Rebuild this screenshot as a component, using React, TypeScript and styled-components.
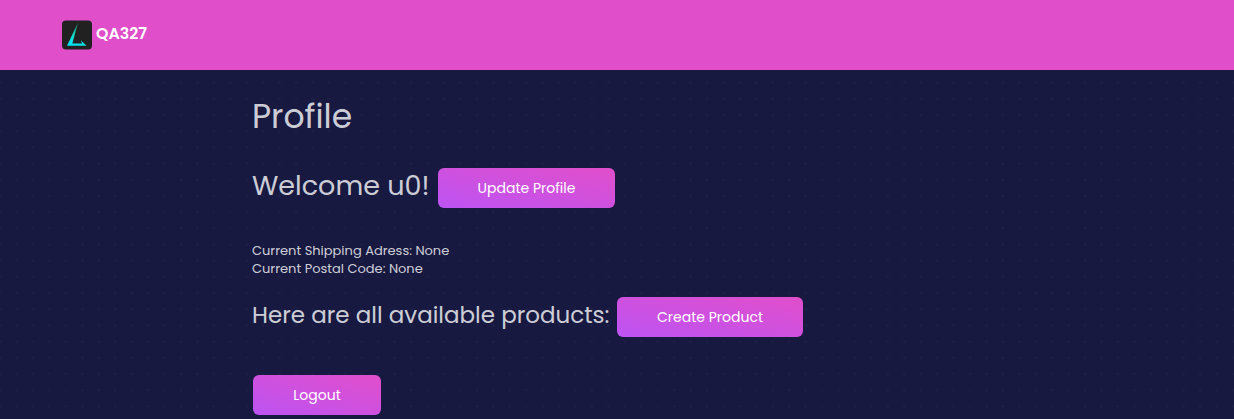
import React from 'react';
import styled, { createGlobalStyle } from 'styled-components';

const GlobalStyle = createGlobalStyle`
  * { box-sizing: border-box; }
  body {
    margin: 0;
    height: 419px;
    overflow: hidden;
    background: #171941;
    color: rgba(255, 255, 255, 0.8);
    font-family: Poppins, Inter, sans-serif;
    font-size: 14px;
  }
`;

const Page = styled.div`
  height: 419px;
  overflow: hidden;
  background-image: radial-gradient(circle at 50% 50%, #1e2048 0.8px, transparent 1.5px);
  background-size: 16.44px 16.2px;
  background-position: -8px 74.5px;
`;

const Navbar = styled.header`
  height: 70px;
  padding: 20px 62px 0;
  display: flex;
  gap: 4px;
  background: #e14eca;
`;

const Brand = styled.span`
  color: #fff;
  font-size: 15.8px;
  font-weight: 600;
  line-height: 27px;
`;

const Content = styled.main`
  padding: 28px 0 0 252px;
`;

const Row = styled.div<{ $gapTop: number }>`
  display: flex;
  height: 40px;
  margin-top: ${(p) => p.$gapTop}px;
`;

const Heading = styled.h1<{ $size: number; $line: number; $width?: number }>`
  margin: 0;
  width: ${(p) => (p.$width ? `${p.$width}px` : 'auto')};
  font-size: ${(p) => p.$size}px;
  font-weight: 400;
  line-height: ${(p) => p.$line}px;
  white-space: nowrap;
`;

const Button = styled.button<{ $width: number }>`
  width: ${(p) => p.$width}px;
  height: 40px;
  padding: 0;
  border: 0;
  border-radius: 6px;
  color: #fff;
  font: inherit;
  font-size: 14px;
  line-height: 40px;
  background: linear-gradient(to bottom left, #e14eca, #ba54f5, #e14eca) top right / 210% 210%;
`;

const LogoutButton = styled(Button)`
  margin-left: 1px;
`;

const Details = styled.div`
  margin-top: 34px;
  line-height: 18px;
`;

const Detail = styled.p`
  margin: 0;
  font-size: 13px;
`;

const Logo = () => (
  <svg width="30" height="30" viewBox="0 0 30 30">
    <defs>
      <linearGradient id="blade" x1="0" y1="1" x2="0.3" y2="0">
        <stop offset="0" stopColor="#00e5ff" />
        <stop offset="0.5" stopColor="#15ddc8" />
        <stop offset="1" stopColor="#168d70" />
      </linearGradient>
    </defs>
    <rect width="30" height="29" rx="4" y="0.4" fill="#212121" />
    <path fill="url(#blade)" d="M16 2.6 5 25.8h19.6l-5.9-5.6 1.4 3.3H10.4Z" />
  </svg>
);

export default function App() {
  return (
    <>
      <GlobalStyle />
      <Page>
        <Navbar>
          <Logo />
          <Brand>QA327</Brand>
        </Navbar>
        <Content>
          <Heading $size={33} $line={37}>Profile</Heading>
          <Row $gapTop={33}>
            <Heading as="h2" $size={27} $line={35} $width={186}>Welcome u0!</Heading>
            <Button $width={177}>Update Profile</Button>
          </Row>
          <Details>
            <Detail>Current Shipping Adress: None</Detail>
            <Detail>Current Postal Code: None</Detail>
          </Details>
          <Row $gapTop={19}>
            <Heading as="h3" $size={23} $line={37} $width={365}>Here are all available products:</Heading>
            <Button $width={186}>Create Product</Button>
          </Row>
          <Row $gapTop={38}>
            <LogoutButton $width={128}>Logout</LogoutButton>
          </Row>
        </Content>
      </Page>
    </>
  );
}
